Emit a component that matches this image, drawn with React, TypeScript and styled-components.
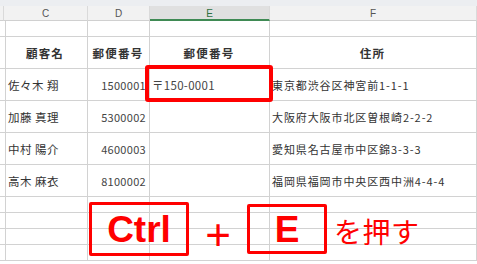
import React from "react";
import styled, { createGlobalStyle } from "styled-components";

const GlobalStyle = createGlobalStyle`
  html, body {
    margin: 0;
    padding: 0;
    background: #ffffff;
  }
  body {
    font-family: "Noto Sans CJK JP", "Noto Sans", sans-serif;
    color: #222;
  }
`;

const Sheet = styled.div`
  position: relative;
  width: 477px;
  height: 264px;
  overflow: hidden;
  background: #fff;
`;

const TopStrip = styled.div`
  height: 6px;
  background: #eceef1;
`;

const Grid = styled.div`
  display: grid;
  grid-template-columns: 4px 84px 62px 120px 1fr;
  grid-template-rows: 15px 16px 32px 32px 32px 32px 32px 16px 16px 16px 16px;
`;

const HeadCell = styled.div<{ $active?: boolean }>`
  box-sizing: border-box;
  background: ${(p) => (p.$active ? "#e0e0e0" : "#f2f2f2")};
  border-right: 1px solid #dadada;
  border-bottom: ${(p) => (p.$active ? "2px solid #3f8a54" : "1px solid #d0d0d0")};
  display: flex;
  align-items: center;
  justify-content: center;
  font-family: "Liberation Sans", Arial, sans-serif;
  font-size: 10px;
  color: ${(p) => (p.$active ? "#2e7040" : "#555")};
  padding-top: 1px;
`;

const Cell = styled.div<{ $align?: "left" | "right" | "center" }>`
  box-sizing: border-box;
  border-right: 1px solid #d2d2d2;
  border-bottom: 1px solid #d2d2d2;
  display: flex;
  align-items: center;
  justify-content: ${(p) =>
    p.$align === "right" ? "flex-end" : p.$align === "center" ? "center" : "flex-start"};
  padding: 0 3px 0 2px;
  font-size: 11.5px;
  white-space: nowrap;
  overflow: visible;
`;

const TitleText = styled.span`
  font-weight: 700;
  letter-spacing: 1.2px;
  font-size: 11.5px;
  color: #333;
`;

const NameText = styled.span`
  letter-spacing: 0.5px;
  color: #333;
  padding-left: 2px;
`;

const NumText = styled.span<{ $big?: boolean }>`
  font-size: ${(p) => (p.$big ? "11.5px" : "11px")};
  color: #444;
  letter-spacing: 0.3px;
`;

const AddrText = styled.span`
  font-size: 11px;
  letter-spacing: 0.9px;
  color: #333;
`;

const Highlight = styled.div`
  position: absolute;
  left: 145px;
  top: 65px;
  width: 128px;
  height: 37px;
  box-sizing: border-box;
  border: 4px solid #ff0000;
  border-radius: 3px;
`;

const Keys = styled.div`
  position: absolute;
  left: 89px;
  top: 201px;
  display: flex;
  align-items: center;
  color: #ff0000;
`;

const KeyBox = styled.div<{ $w: number; $h: number }>`
  box-sizing: border-box;
  width: ${(p) => p.$w}px;
  height: ${(p) => p.$h}px;
  border: 3px solid #ff0000;
  border-radius: 2px;
  display: flex;
  align-items: center;
  justify-content: center;
  font-family: "Liberation Sans", Arial, sans-serif;
  font-weight: 700;
  font-size: 37px;
  padding-top: 2px;
`;

const Plus = styled.div`
  width: 58px;
  display: flex;
  justify-content: center;
  font-family: "Liberation Sans", Arial, sans-serif;
  font-size: 44px;
  line-height: 1;
  margin-top: 12px;
`;

const PressText = styled.div`
  margin-left: 7px;
  font-size: 28px;
  margin-top: 4px;
  letter-spacing: 0.5px;
`;

const columns = ["C", "D", "E", "F"];

const rows = [
  { name: "佐々木 翔", zip: "1500001", addr: "東京都渋谷区神宮前1-1-1", fmt: "〒150-0001" },
  { name: "加藤 真理", zip: "5300002", addr: "大阪府大阪市北区曽根崎2-2-2", fmt: "" },
  { name: "中村 陽介", zip: "4600003", addr: "愛知県名古屋市中区錦3-3-3", fmt: "" },
  { name: "高木 麻衣", zip: "8100002", addr: "福岡県福岡市中央区西中洲4-4-4", fmt: "" },
];

const App: React.FC = () => {
  return (
    <>
      <GlobalStyle />
      <Sheet>
        <TopStrip />
        <Grid>
          <HeadCell />
          {columns.map((c) => (
            <HeadCell key={c} $active={c === "E"}>
              {c}
            </HeadCell>
          ))}

          <Cell />
          <Cell />
          <Cell />
          <Cell />
          <Cell />

          <Cell />
          <Cell $align="center">
            <TitleText>顧客名</TitleText>
          </Cell>
          <Cell $align="center">
            <TitleText>郵便番号</TitleText>
          </Cell>
          <Cell $align="center">
            <TitleText>郵便番号</TitleText>
          </Cell>
          <Cell $align="center">
            <TitleText>住所</TitleText>
          </Cell>

          {rows.map((r) => (
            <React.Fragment key={r.zip}>
              <Cell />
              <Cell>
                <NameText>{r.name}</NameText>
              </Cell>
              <Cell $align="right">
                <NumText>{r.zip}</NumText>
              </Cell>
              <Cell>
                <NumText $big>{r.fmt}</NumText>
              </Cell>
              <Cell>
                <AddrText>{r.addr}</AddrText>
              </Cell>
            </React.Fragment>
          ))}

          {[0, 1, 2, 3].map((i) => (
            <React.Fragment key={i}>
              <Cell />
              <Cell />
              <Cell />
              <Cell />
              <Cell />
            </React.Fragment>
          ))}
        </Grid>

        <Highlight />
        <Keys>
          <KeyBox $w={100} $h={54}>Ctrl</KeyBox>
          <Plus>+</Plus>
          <KeyBox $w={80} $h={50}>E</KeyBox>
          <PressText>を押す</PressText>
        </Keys>
      </Sheet>
    </>
  );
};

export default App;
